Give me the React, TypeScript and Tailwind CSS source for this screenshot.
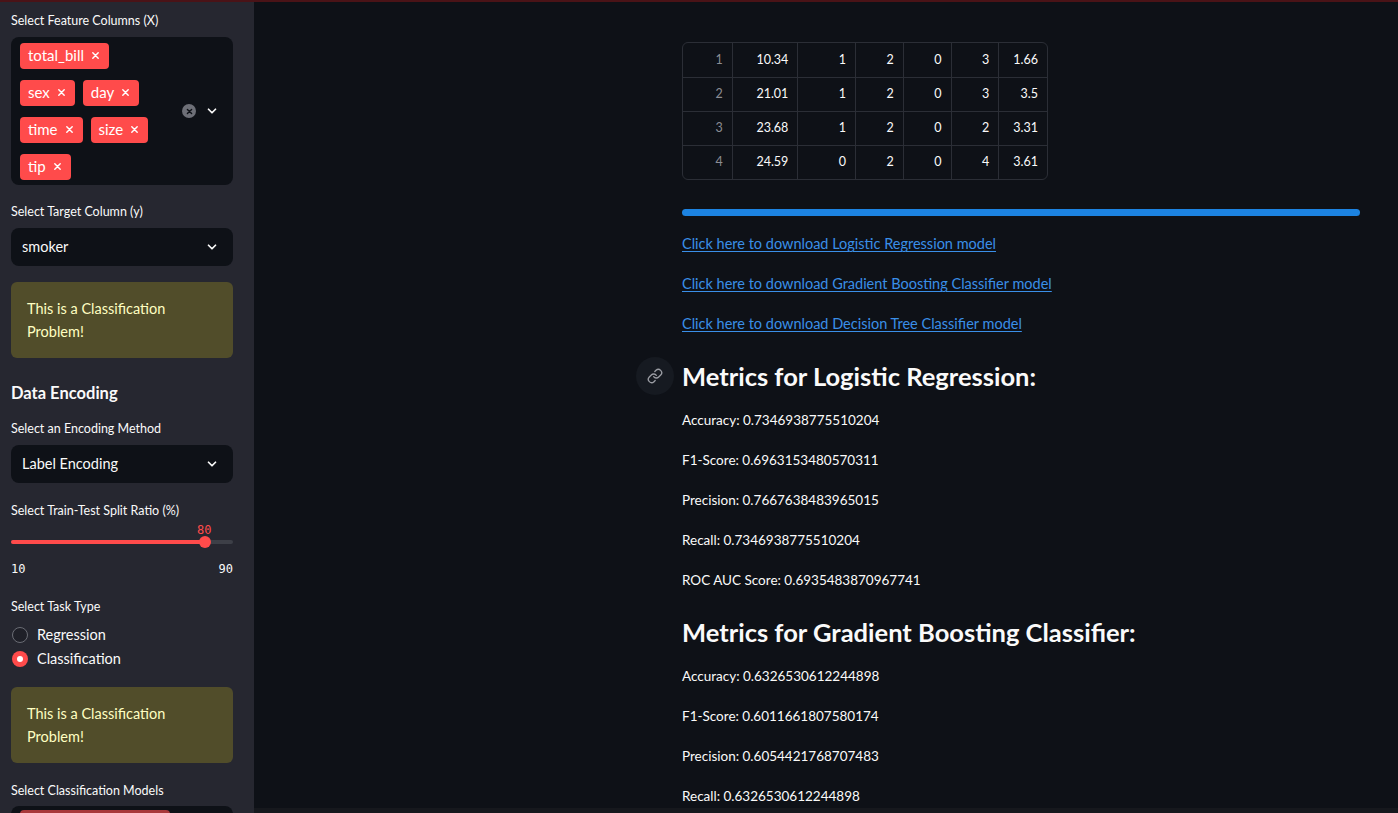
import React from 'react';

const font = { fontFamily: 'Lato, "Noto Sans", sans-serif' };
const mono = { fontFamily: '"DejaVu Sans Mono", monospace' };

const Chevron: React.FC = () => (
    <svg width="14" height="14" viewBox="0 0 24 24" fill="none" stroke="#fafafa" strokeWidth="3" strokeLinecap="round" strokeLinejoin="round">
        <path d="M6 9l6 6 6-6" />
    </svg>
);

const Tag: React.FC<{ label: string }> = ({ label }) => (
    <span className="h-[26px] flex items-center gap-[7px] pl-2 pr-[9px] rounded bg-[#ff4b4b] text-white text-[15px]">
        {label}
        <svg width="9" height="9" viewBox="0 0 10 10" stroke="white" strokeWidth="1.6" strokeLinecap="round">
            <path d="M2 2l6 6M8 2l-6 6" />
        </svg>
    </span>
);

const Label: React.FC<{ children: React.ReactNode; className?: string }> = ({ children, className = '' }) => (
    <div className={`text-[12.5px] leading-4 text-[#fafafa] ${className}`}>{children}</div>
);

const SelectBox: React.FC<{ value: string; className?: string }> = ({ value, className = '' }) => (
    <div className={`h-[38px] rounded-lg bg-[#0e1117] flex items-center justify-between pl-[11px] pr-[14px] text-[14.5px] text-[#fafafa] ${className}`}>
        <span>{value}</span>
        <Chevron />
    </div>
);

const Warning: React.FC<{ className?: string }> = ({ className = '' }) => (
    <div className={`h-[76px] rounded-md bg-[#514d2a] px-4 py-[15px] text-[14.5px] leading-[23px] text-[#ffffc2] ${className}`}>
        This is a Classification<br />Problem!
    </div>
);

const Radio: React.FC<{ label: string; checked?: boolean }> = ({ label, checked }) => (
    <div className="h-6 flex items-center gap-[9px] text-[14.5px] text-[#fafafa]">
        {checked ? (
            <span className="w-[16px] h-[16px] rounded-full bg-[#ff4b4b] flex items-center justify-center">
                <span className="w-[6px] h-[6px] rounded-full bg-white" />
            </span>
        ) : (
            <span className="w-[16px] h-[16px] rounded-full border-[1.5px] border-[#6b6d75] bg-[#1f2028]" />
        )}
        {label}
    </div>
);

const rows = [
    ['1', '10.34', '1', '2', '0', '3', '1.66'],
    ['2', '21.01', '1', '2', '0', '3', '3.5'],
    ['3', '23.68', '1', '2', '0', '2', '3.31'],
    ['4', '24.59', '0', '2', '0', '4', '3.61'],
];
const colW = ['w-[49px]', 'w-[66px]', 'w-[58px]', 'w-[48px]', 'w-[48px]', 'w-[48px]', 'w-[49px]'];

const metricsLR = [
    'Accuracy: 0.7346938775510204',
    'F1-Score: 0.6963153480570311',
    'Precision: 0.7667638483965015',
    'Recall: 0.7346938775510204',
    'ROC AUC Score: 0.6935483870967741',
];
const metricsGB = [
    'Accuracy: 0.6326530612244898',
    'F1-Score: 0.6011661807580174',
    'Precision: 0.6054421768707483',
    'Recall: 0.6326530612244898',
];

const links = [
    'Click here to download Logistic Regression model',
    'Click here to download Gradient Boosting Classifier model',
    'Click here to download Decision Tree Classifier model',
];

const tagRows = [['total_bill'], ['sex', 'day'], ['time', 'size'], ['tip']];

export default function App() {
    return (
        <div className="relative w-[1398px] h-[813px] overflow-hidden flex bg-[#0e1117]" style={font}>
            <div className="absolute top-0 left-0 right-0 h-[2px] bg-[#4a1317]" />

            {/* sidebar */}
            <aside className="w-[254px] shrink-0 h-full overflow-hidden bg-[#262730] pt-[13px] pl-[11px] pr-[21px]">
                <Label>Select Feature Columns (X)</Label>
                <div className="mt-2 h-[148px] rounded-lg bg-[#0e1117] flex items-center pl-[9px] pr-[14px]">
                    <div className="flex flex-col gap-[11px]">
                        {tagRows.map((r, i) => (
                            <div key={i} className="flex gap-2">
                                {r.map(t => <Tag key={t} label={t} />)}
                            </div>
                        ))}
                    </div>
                    <div className="ml-auto flex items-center gap-[9px]">
                        <span className="w-[14px] h-[14px] rounded-full bg-[#6d6f77] flex items-center justify-center">
                            <svg width="7" height="7" viewBox="0 0 10 10" stroke="#0e1117" strokeWidth="2" strokeLinecap="round">
                                <path d="M2 2l6 6M8 2l-6 6" />
                            </svg>
                        </span>
                        <Chevron />
                    </div>
                </div>

                <Label className="mt-[19px]">Select Target Column (y)</Label>
                <SelectBox value="smoker" className="mt-2" />
                <Warning className="mt-4" />

                <div className="mt-[24px] text-[16.5px] font-bold leading-[22px] text-[#fafafa]">Data Encoding</div>
                <Label className="mt-[17px]">Select an Encoding Method</Label>
                <SelectBox value="Label Encoding" className="mt-2" />

                <Label className="mt-5">Select Train-Test Split Ratio (%)</Label>
                <div className="relative mt-[3px] h-[56px]">
                    <div className="absolute left-[186px] top-0 text-[12px] leading-4 text-[#ff4b4b]" style={mono}>80</div>
                    <div className="absolute left-0 right-0 top-[18px] h-1 rounded-full bg-[#3d3f47]">
                        <div className="h-full rounded-full bg-[#ff4b4b]" style={{ width: '87.5%' }} />
                    </div>
                    <div className="absolute left-[188px] top-[14px] w-3 h-3 rounded-full bg-[#ff4b4b]" />
                    <div className="absolute left-0 right-0 top-[39px] flex justify-between text-[12px] leading-4 text-[#fafafa]" style={mono}>
                        <span>10</span>
                        <span>90</span>
                    </div>
                </div>

                <Label className="mt-[21px]">Select Task Type</Label>
                <div className="mt-[8px] flex flex-col pl-[1px]">
                    <Radio label="Regression" />
                    <Radio label="Classification" checked />
                </div>
                <Warning className="mt-4" />

                <Label className="mt-5">Select Classification Models</Label>
                <div className="mt-[7px] h-10 rounded-lg bg-[#0e1117] pl-[9px] pt-[4px]">
                    <div className="w-[150px] h-[26px] rounded bg-[#a8383b]" />
                </div>
            </aside>

            {/* main */}
            <main className="flex-1 h-full pl-[428px] pt-[42px] text-[#fafafa]">
                <div className="w-[678px] flex flex-col">
                    <div className="w-[366px] rounded-md border border-[#2b2e36] overflow-hidden">
                        {rows.map((r, i) => (
                            <div key={i} className={`flex h-[34px] ${i > 0 ? 'border-t border-[#2b2e36]' : ''}`}>
                                {r.map((c, j) => (
                                    <div
                                        key={j}
                                        className={`${colW[j]} flex items-center justify-end pr-[9px] text-[12.5px] ${j > 0 ? 'border-l border-[#2b2e36]' : ''} ${j === 0 ? 'text-[#8b8d93]' : 'text-[#fafafa]'}`}
                                    >
                                        {c}
                                    </div>
                                ))}
                            </div>
                        ))}
                    </div>

                    <div className="mt-[29px] h-[7px] rounded-full bg-[#1c83e1]" />

                    <div className="mt-2 flex flex-col">
                        {links.map(l => (
                            <div key={l} className="h-10 flex items-center">
                                <a className="text-[14.5px] text-[#3a8fe8] underline underline-offset-2">{l}</a>
                            </div>
                        ))}
                    </div>

                    <div className="relative mt-2 h-12 flex items-center">
                        <span className="absolute left-[-46px] top-[5px] w-[38px] h-[38px] rounded-full bg-[#161a21] flex items-center justify-center">
                            <svg width="16" height="16" viewBox="0 0 24 24" fill="none" stroke="#9a9ca3" strokeWidth="2" strokeLinecap="round" strokeLinejoin="round">
                                <path d="M10 13a5 5 0 0 0 7.54.54l3-3a5 5 0 0 0-7.07-7.07l-1.72 1.71" />
                                <path d="M14 11a5 5 0 0 0-7.54-.54l-3 3a5 5 0 0 0 7.07 7.07l1.71-1.71" />
                            </svg>
                        </span>
                        <h3 className="text-[25.5px] font-bold">Metrics for Logistic Regression:</h3>
                    </div>
                    {metricsLR.map(m => (
                        <div key={m} className="h-10 flex items-center text-[13.5px]">{m}</div>
                    ))}

                    <div className="mt-2 h-12 flex items-center">
                        <h3 className="text-[25.5px] font-bold">Metrics for Gradient Boosting Classifier:</h3>
                    </div>
                    {metricsGB.map(m => (
                        <div key={m} className="h-10 flex items-center text-[13.5px]">{m}</div>
                    ))}
                </div>
            </main>
            <div className="absolute left-[254px] right-0 bottom-0 h-[5px] bg-[#16181d]" />
        </div>
    );
}
